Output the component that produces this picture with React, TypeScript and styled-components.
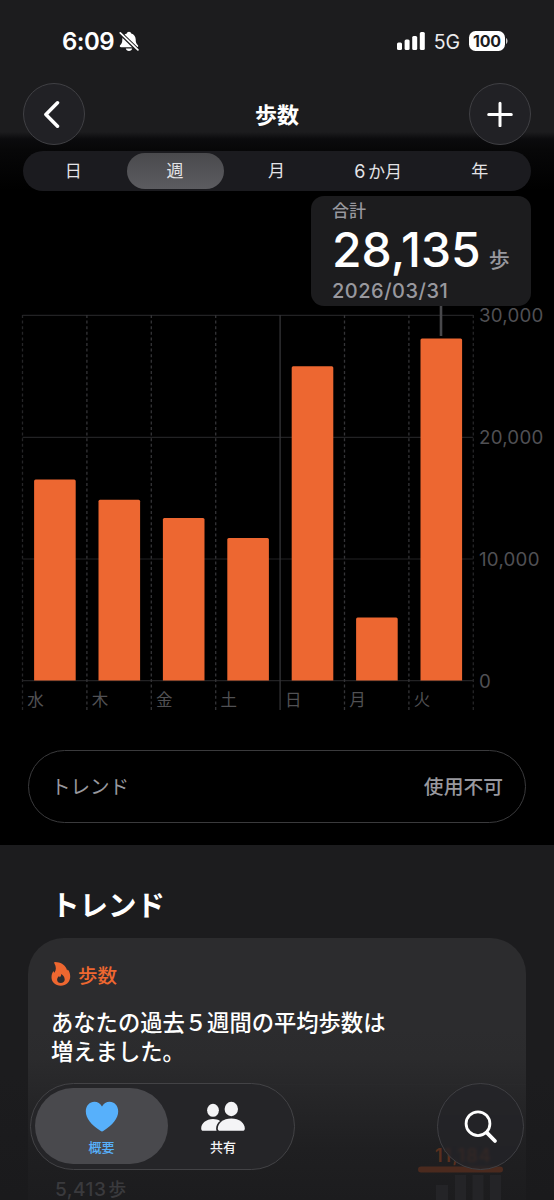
import React from "react";
import styled, { createGlobalStyle, css } from "styled-components";

const GlobalStyle = createGlobalStyle`
  * { box-sizing: border-box; }
  body {
    margin: 0;
    background: #000;
    color: #fff;
    font-family: Inter, "Noto Sans CJK JP", sans-serif;
  }
  svg { display: block; }
`;

const Screen = styled.main`
  position: relative;
  width: 554px;
  height: 1200px;
  overflow: hidden;
  display: flex;
  flex-direction: column;
  background: #000;
`;

const Header = styled.header`
  flex: none;
  height: 192px;
  padding: 25px 23px 0;
  background: linear-gradient(#1c1c1e 0, #1c1c1e 132px, #0b0b0d 139px, #070708 150px, #000 190px);
`;

const StatusBar = styled.div`
  display: flex;
  align-items: center;
  height: 32px;
  padding: 0 23px 0 39px;
`;

const Clock = styled.span`
  font-size: 24px;
  font-weight: 600;
  line-height: 32px;
  letter-spacing: -0.5px;
  margin-right: 5px;
  padding-top: 2px;
`;

const StatusRight = styled.div`
  margin-left: auto;
  display: flex;
  align-items: center;
`;

const Network = styled.span`
  margin: 0 9px 0 8.5px;
  padding-top: 2px;
  font-size: 19.5px;
  line-height: 32px;
  font-weight: 400;
  letter-spacing: -0.1px;
  color: #ececee;
`;

const Battery = styled.span`
  width: 36px;
  height: 20px;
  border-radius: 6.5px;
  background: #fff;
  color: #1c1c1e;
  font-size: 16px;
  font-weight: 700;
  line-height: 20px;
  text-align: center;
  letter-spacing: -0.2px;
`;

const NavBar = styled.nav`
  display: flex;
  align-items: center;
  justify-content: space-between;
  height: 62px;
  margin-top: 26px;
`;

const RoundButton = styled.button<{ $size: number; $glass?: boolean }>`
  display: grid;
  place-items: center;
  width: ${(p) => p.$size}px;
  height: ${(p) => p.$size}px;
  padding: 0;
  border: 1.5px solid #404044;
  border-radius: 50%;
  background: ${(p) => (p.$glass ? "rgba(36, 36, 40, 0.72)" : "#212125")};
  backdrop-filter: ${(p) => (p.$glass ? "blur(1.5px)" : "none")};
  color: #fff;
`;

const NavTitle = styled.h1`
  margin: 0;
  padding-top: 2px;
  font-size: 22px;
  line-height: 30px;
  font-weight: 700;
`;

const Segments = styled.div`
  display: grid;
  grid-template-columns: repeat(5, 1fr);
  height: 40px;
  margin-top: 6px;
  padding: 2px 0;
  border-radius: 20px;
  background: #1b1b1f;
`;

const Segment = styled.button<{ $active?: boolean }>`
  height: 36px;
  margin: 0 2.5px;
  padding: 1px 1px 0 0;
  border: 0;
  border-radius: 18px;
  background: ${(p) => (p.$active ? "linear-gradient(#4a4a4d, #5c5c60)" : "none")};
  color: #e4e4e7;
  font: 400 17px/35px Inter, "Noto Sans CJK JP", sans-serif;
`;

const Numeral = styled.span`
  margin-right: 2.5px;
  font-size: 18px;
`;

const ChartArea = styled.section`
  position: relative;
  flex: none;
  height: 558px;
`;

const Callout = styled.div`
  position: absolute;
  left: 311px;
  top: 4px;
  width: 220px;
  height: 110px;
  padding: 3px 21px 0;
  border-radius: 13px;
  background: #1c1c1e;
  color: #98989e;
`;

const CalloutLabel = styled.div`
  font-size: 17px;
  line-height: 24px;
  font-weight: 500;
`;

const CalloutValue = styled.div`
  display: flex;
  align-items: baseline;
  height: 55px;
  font-size: 21px;
  line-height: 54px;
  font-weight: 500;
  white-space: nowrap;
`;

const BigNumber = styled.span`
  margin-right: 8px;
  color: #fff;
  font-size: 48px;
  letter-spacing: 0;
`;

const CalloutDate = styled.div`
  font-size: 20px;
  line-height: 26px;
  font-weight: 500;
  letter-spacing: 0.5px;
`;

const TrendPill = styled.div`
  flex: none;
  display: flex;
  align-items: center;
  justify-content: space-between;
  width: 498px;
  height: 73px;
  margin: 0 28px;
  padding: 0 22px;
  border: 1.5px solid #3a3a3c;
  border-radius: 37px;
  font-size: 19.5px;
  line-height: 28px;
  color: #98989e;
`;

const PillValue = styled.span`
  font-size: 19.8px;
  font-weight: 500;
`;

const Lower = styled.section`
  flex: 1;
  margin-top: 22px;
  padding: 41px 28px 0;
  background: linear-gradient(#1c1c1e 230px, #19191b);
`;

const SectionTitle = styled.h2`
  margin: 0 0 0 23px;
  height: 52px;
  font-size: 28.5px;
  line-height: 40px;
  font-weight: 700;
`;

const TrendCard = styled.article`
  width: 498px;
  height: 320px;
  padding: 22px 23px 0;
  border-radius: 36px;
  background: linear-gradient(#2c2c2e 90px, #2b2b2d 120px, #1f1f21 210px, #1c1c1e 262px);
`;

const CardHead = styled.div`
  display: flex;
  align-items: center;
  gap: 7px;
  height: 29px;
  color: #ee6730;
  font-size: 19.5px;
  font-weight: 500;
`;

const CardText = styled.p`
  margin: 20px 0 0;
  font-size: 22.3px;
  line-height: 28.5px;
  font-weight: 500;
`;

const CardBody = styled.div`
  display: flex;
  justify-content: space-between;
  margin: 18px -23px 0 0;
  border-top: 1px solid #29292b;
`;

const DimValue = styled.span`
  margin: 92px 0 0 4px;
  color: #3a3a3d;
  font-size: 19px;
  line-height: 26px;
  font-weight: 500;
  letter-spacing: 0.5px;
`;

const DimUnit = styled.span`
  margin-left: 2px;
  font-size: 18px;
`;

const MiniChart = styled.svg`
  margin: 59px 22px 0 0;
`;

const TabBar = styled.nav`
  position: absolute;
  left: 30px;
  top: 1083px;
  display: flex;
  width: 265px;
  height: 87px;
  padding: 4px;
  border: 1.5px solid #434346;
  border-radius: 44px;
  background: #252528;
`;

const Tab = styled.button<{ $active?: boolean }>`
  display: flex;
  flex-direction: column;
  align-items: center;
  width: ${(p) => (p.$active ? 133 : 110)}px;
  height: 76px;
  padding: 13px 0 0;
  border: 0;
  border-radius: 38px;
  background: none;
  color: #f4f4f6;
  font: 500 13px/20px Inter, "Noto Sans CJK JP", sans-serif;
  ${(p) =>
    p.$active &&
    css`
      background: #49494d;
      color: #57b0fb;
    `}
`;

const TabLabel = styled.span`
  margin-top: 5px;
`;

const SearchSlot = styled.div`
  position: absolute;
  left: 437px;
  top: 1083px;
`;

const COL = 64.4;
const LEFT = 22.5;
const days = [
  { label: "水", top: 287.5 },
  { label: "木", top: 307.8 },
  { label: "金", top: 326 },
  { label: "土", top: 346 },
  { label: "日", top: 174.3 },
  { label: "月", top: 425.5 },
  { label: "火", top: 146.6 },
];
const levels = [
  { label: "30,000", y: 123.3 },
  { label: "20,000", y: 245.3 },
  { label: "10,000", y: 367 },
  { label: "0", y: 488.7 },
];

function StepsChart() {
  return (
    <svg width="554" height="558" viewBox="0 0 554 558">
      {levels.map((l) => (
        <g key={l.label}>
          <line x1={LEFT} x2={LEFT + COL * 7} y1={l.y} y2={l.y} stroke="#222224" strokeWidth="1.2" />
          <text x="479" y={l.y + 7} fontSize="18.7" fill="#505054" letterSpacing="0.25">
            {l.label}
          </text>
        </g>
      ))}
      {[0, 1, 2, 3, 4, 5, 6, 7].map((i) => (
        <line
          key={i}
          x1={LEFT + COL * i}
          x2={LEFT + COL * i}
          y1="123"
          y2="518"
          stroke={i === 0 || i === 7 ? "#252527" : "#343437"}
          strokeWidth="1.3"
          strokeDasharray={i === 4 ? undefined : "3 2.6"}
        />
      ))}
      <line x1="441" x2="441" y1="112" y2="144" stroke="#48484b" strokeWidth="2.6" />
      {days.map((d, i) => {
        const x = LEFT + COL * i + 11.6;
        return (
          <g key={d.label}>
            <path
              d={`M${x} 488.5V${d.top + 1.5}q0-1.5 1.5-1.5h38.6q1.5 0 1.5 1.5V488.5z`}
              fill="#ed6731"
            />
            <text x={LEFT + COL * i + 4.8} y="513.5" fontSize="16.5" fill="#515154">
              {d.label}
            </text>
          </g>
        );
      })}
    </svg>
  );
}

function BellSlash() {
  return (
    <svg width="20" height="21" viewBox="0 0 20 21">
      <path
        d="M10 .8c-1.100 0-2 .7-2.200 1.700C5 3.200 3.300 5.500 3.300 8.500c0 3-.6 4.100-2 5.400-1 .9-.5 2.300.9 2.300h15.600c1.400 0 1.900-1.400.9-2.300-1.400-1.300-2-2.400-2-5.400 0-3-1.700-5.300-4.500-6-.2-1-1.100-1.700-2.200-1.700zM6.800 17.600h6.400c-.3 1.500-1.500 2.400-3.200 2.400s-2.900-.9-3.200-2.400z"
        fill="#fff"
      />
      <path d="M.8 1.600L19 19.200" stroke="#1c1c1e" strokeWidth="4" />
      <path d="M1.300 1.900L18.900 18.900" stroke="#fff" strokeWidth="1.700" strokeLinecap="round" />
    </svg>
  );
}

function Flame() {
  return (
    <svg width="20" height="25" viewBox="0 0 20 25">
      <path
        fillRule="evenodd"
        d="M3.400 1.400C2.900.7 3.300.1 4.100.1c5.400.2 9.400 2.600 11.200 6.200.4.800.6 1.500.8 2.200.3-.3.500-.7.600-1.100 1.900 2 2.600 4.600 2.500 7.600-.3 5.200-4 8.700-9.400 8.700S.5 20.200.5 15.300c0-2.500.8-4.400 1.900-6.200.2.700.5 1.200 1 1.600C5.500 7.900 5.200 4.200 3.400 1.400zM10.100 12.100c.3 1.500-.3 2.300-1.200 3.200-.5-.3-.7-.7-.7-1.200-1.300 1.100-2.100 2.300-2.100 3.700 0 2 1.500 3.300 3.700 3.300s3.900-1.400 3.900-3.600c0-2.300-1.500-4.400-3.600-5.400z"
        fill="#ee6730"
      />
    </svg>
  );
}

export default function App() {
  return (
    <>
      <GlobalStyle />
      <Screen>
        <Header>
          <StatusBar>
            <Clock>6:09</Clock>
            <BellSlash />
            <StatusRight>
              <svg width="28" height="18" viewBox="0 0 28 18" fill="#fff">
                <rect x="0" y="10.500" width="5" height="7.500" rx="1.500" />
                <rect x="7.600" y="7.500" width="5" height="10.500" rx="1.500" />
                <rect x="15.200" y="4" width="5" height="14" rx="1.500" />
                <rect x="22.800" y="0" width="5" height="18" rx="1.500" />
              </svg>
              <Network>5G</Network>
              <Battery>100</Battery>
              <svg width="3" height="8" viewBox="0 0 3 8">
                <path d="M1 1c2 1 2 5 0 6z" fill="#c8c8ca" />
              </svg>
            </StatusRight>
          </StatusBar>
          <NavBar>
            <RoundButton $size={62} aria-label="戻る">
              <svg width="20" height="30" viewBox="0 0 20 30" fill="none" stroke="#fff" strokeWidth="3.500" strokeLinecap="round" strokeLinejoin="round">
                <path d="M13.500 3.800L1.900 15.500L13.500 27.200" />
              </svg>
            </RoundButton>
            <NavTitle>歩数</NavTitle>
            <RoundButton $size={62} aria-label="追加">
              <svg width="26" height="26" viewBox="0 0 26 26" fill="none" stroke="#fff" strokeWidth="3" strokeLinecap="round">
                <path d="M13 2.200V24.800M1.700 13.500H24.300" />
              </svg>
            </RoundButton>
          </NavBar>
          <Segments>
            <Segment>日</Segment>
            <Segment $active>週</Segment>
            <Segment>月</Segment>
            <Segment>
              <Numeral>6</Numeral>か月
            </Segment>
            <Segment>年</Segment>
          </Segments>
        </Header>

        <ChartArea>
          <StepsChart />
          <Callout>
            <CalloutLabel>合計</CalloutLabel>
            <CalloutValue>
              <BigNumber>28,135</BigNumber>歩
            </CalloutValue>
            <CalloutDate>2026/03/31</CalloutDate>
          </Callout>
        </ChartArea>

        <TrendPill>
          <span>トレンド</span>
          <PillValue>使用不可</PillValue>
        </TrendPill>

        <Lower>
          <SectionTitle>トレンド</SectionTitle>
          <TrendCard>
            <CardHead>
              <Flame />
              歩数
            </CardHead>
            <CardText>
              あなたの過去５週間の平均歩数は
              <br />
              増えました。
            </CardText>
            <CardBody>
              <DimValue>
                5,413<DimUnit>歩</DimUnit>
              </DimValue>
              <MiniChart width="86" height="60" viewBox="0 0 86 60">
                <text x="17" y="18" fontSize="18" fontWeight="600" fill="#5a301e" letterSpacing="1">
                  11,184
                </text>
                <rect x="0" y="22.500" width="85" height="6" rx="3" fill="#4b2a1e" />
                <g fill="#242427">
                  <rect x="18" y="41" width="12" height="19" />
                  <rect x="37" y="31" width="11" height="29" />
                  <rect x="54.500" y="31" width="11" height="29" />
                  <rect x="72" y="31" width="11" height="29" />
                </g>
              </MiniChart>
            </CardBody>
          </TrendCard>
        </Lower>

        <TabBar>
          <Tab $active>
            <svg width="34" height="31" viewBox="0 0 34 31">
              <path
                d="M17 30.500c-.5 0-1-.3-1.600-.7C6.400 23.800.8 17.700.8 10.300.8 4.700 4.600.8 9.400.8c3.300 0 6 1.700 7.600 4.600C18.600 2.500 21.300.8 24.600.8c4.800 0 8.600 3.900 8.600 9.500 0 7.400-5.600 13.500-14.600 19.500-.6.400-1.100.7-1.600.7z"
                fill="#57b0fb"
              />
            </svg>
            <TabLabel>概要</TabLabel>
          </Tab>
          <Tab>
            <svg width="46" height="31" viewBox="0 0 46 31" fill="#f4f4f6">
              <ellipse cx="13" cy="9.300" rx="5.900" ry="6.500" />
              <path d="M1.200 27.500c0-5.200 5-9.500 11.800-9.500 2.800 0 5.200.7 7.100 1.900-2.700 2-4 4.600-4 7.500 0 1 .2 1.800.5 2.400H3.200c-1.300 0-2-.8-2-2.300z" />
              <ellipse cx="31.300" cy="8" rx="6.700" ry="7.200" />
              <path d="M17.800 27.500c0-5.200 5.400-10 13.500-10s13.500 4.800 13.500 10c0 1.500-.8 2.300-2.200 2.300H20c-1.400 0-2.200-.8-2.200-2.300z" />
            </svg>
            <TabLabel>共有</TabLabel>
          </Tab>
        </TabBar>
        <SearchSlot>
          <RoundButton $size={87} $glass aria-label="検索">
            <svg width="34" height="34" viewBox="0 0 34 34" fill="none" stroke="#fff" strokeLinecap="round">
              <circle cx="14" cy="13.700" r="11.900" strokeWidth="2.800" />
              <path d="M22.800 22.600L31 31" strokeWidth="3.800" />
            </svg>
          </RoundButton>
        </SearchSlot>
      </Screen>
    </>
  );
}
